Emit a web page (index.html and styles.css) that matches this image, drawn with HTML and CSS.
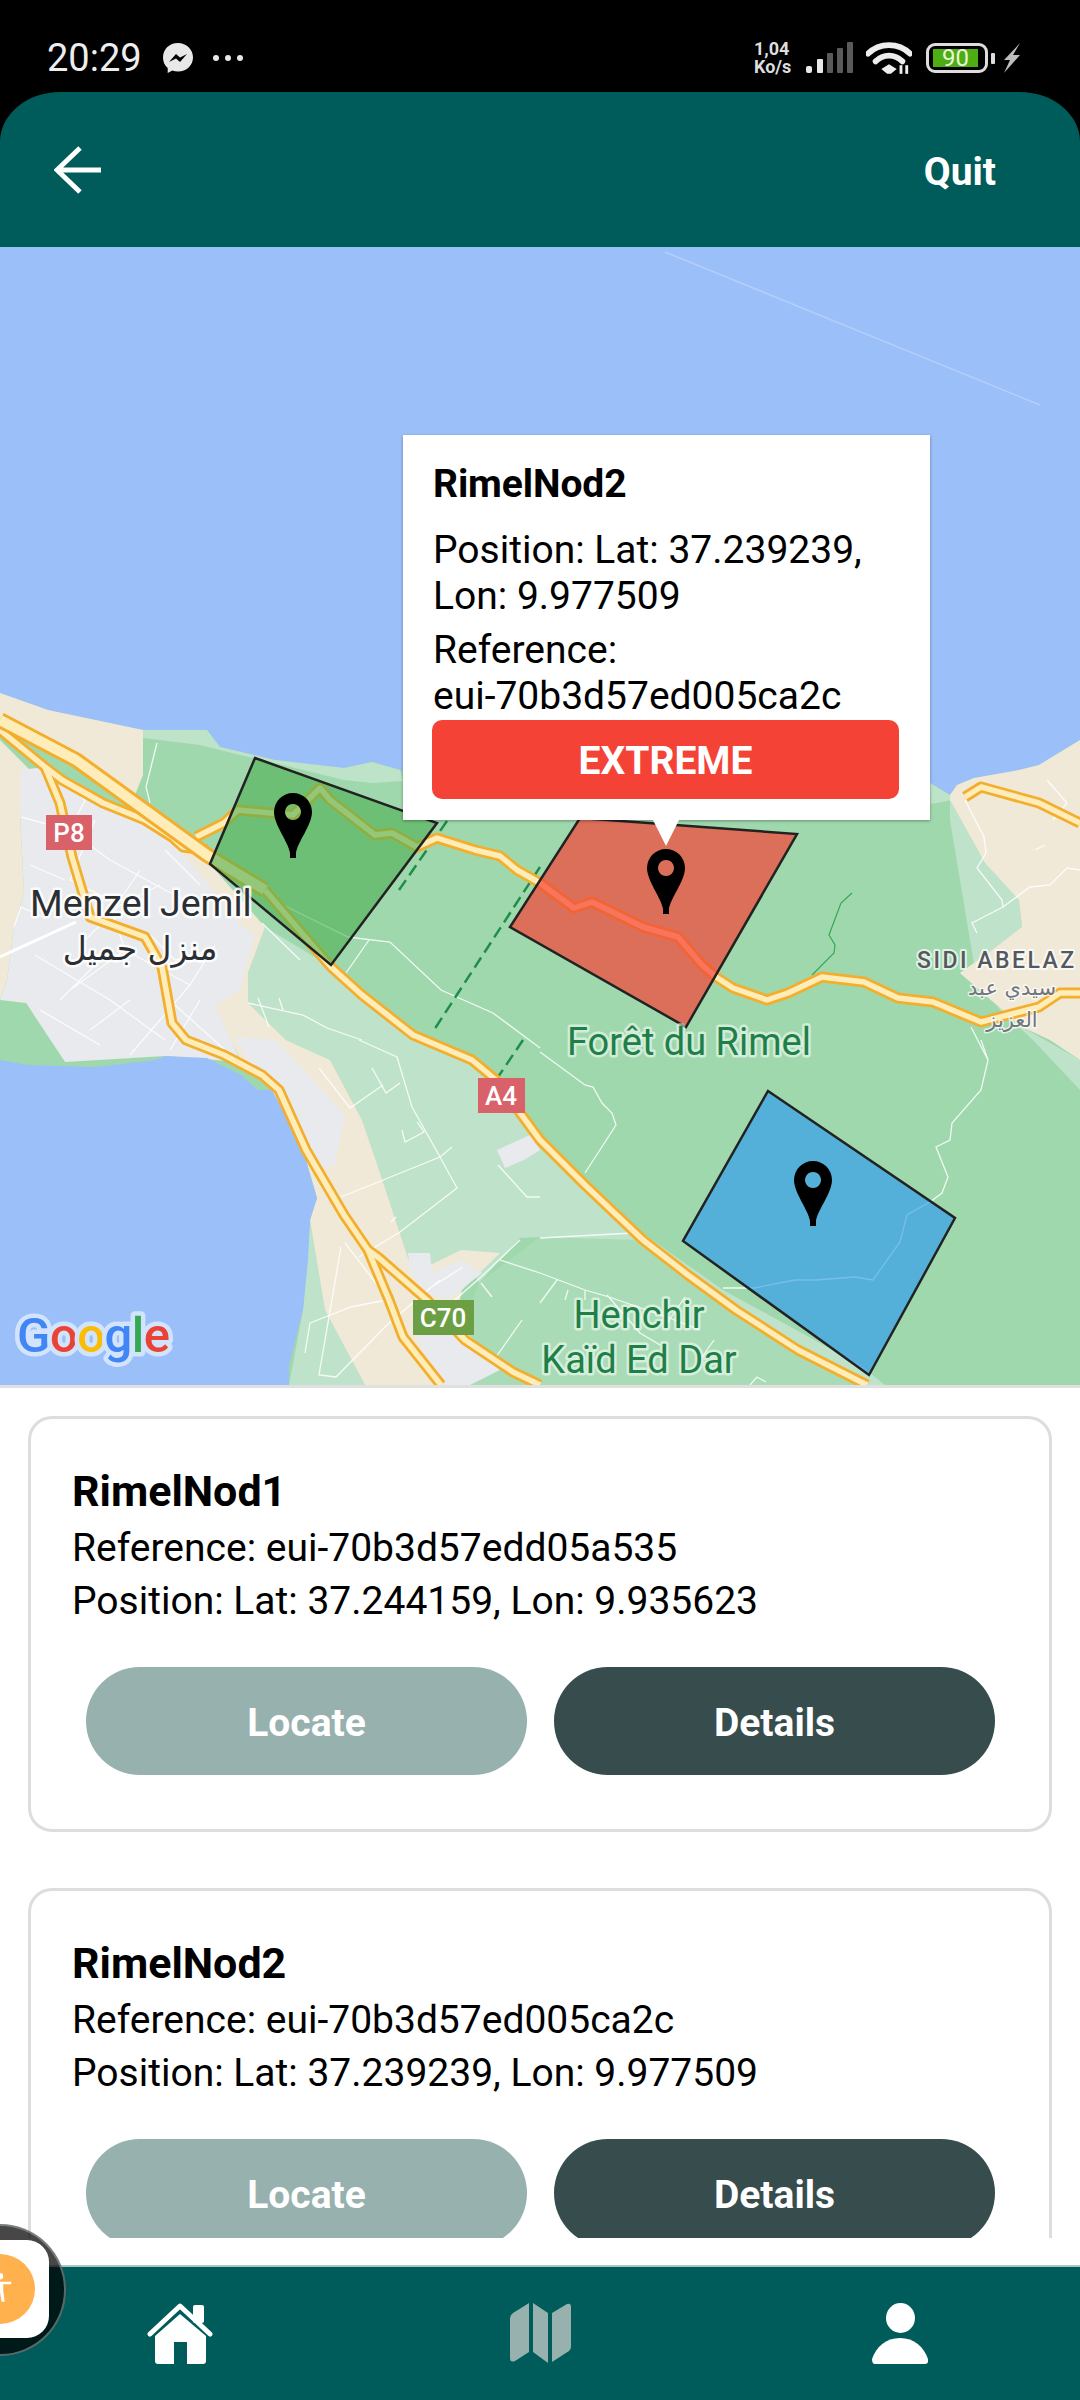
FILE: index.html
```html
<!DOCTYPE html>
<html lang="en">
<head>
<meta charset="utf-8">
<title>Rimel nodes</title>
<link rel="stylesheet" href="styles.css">
</head>
<body>
<div class="app">
  <div class="status-bar">
    <div class="status-left">
      <span class="clock">20:29</span>
      <svg class="messenger" viewBox="0 0 32 32"><path class="msg-bubble" d="M16 1C7.500 1 1 7.200 1 15.400c0 4.300 1.800 8 4.700 10.600V31l4.600-2.500c1.800.6 3.700.9 5.700.9 8.500 0 15-6.200 15-14S24.500 1 16 1z"/><path class="msg-bolt" d="M7 20l7-8 4 3.600L25 12l-7 8-4-3.600z"/></svg>
      <span class="dots"><i></i><i></i><i></i></span>
    </div>
    <div class="status-right">
      <span class="speed">1,04<br>Ko/s</span>
      <svg class="signal" viewBox="0 0 47 32"><rect class="bar-on" x="0" y="24" width="6" height="7" rx="2"/><rect class="bar-on" x="11" y="17" width="6" height="14" rx="1"/><rect class="bar-off" x="21" y="11" width="6" height="20" rx="1"/><rect class="bar-off" x="31" y="6" width="6" height="25" rx="1"/><rect class="bar-off" x="41" y="0" width="6" height="31" rx="1"/></svg>
      <svg class="wifi" viewBox="0 0 48 34"><path class="wifi-arc" d="M2 12C14 0 34 0 46 12"/><path class="wifi-arc" d="M10 20c8-8 20-8 28 0"/><path class="wifi-dot" d="M24 23l-8 5 6 5h4l6-5z"/><rect class="wifi-dot" x="35" y="24" width="3" height="9"/><rect class="wifi-dot" x="41" y="24" width="3" height="9"/></svg>
      <div class="battery"><span class="battery-level">90</span></div>
      <span class="battery-nub"></span>
      <svg class="bolt" viewBox="0 0 20 30"><path d="M19 0L3 17h6L3 30l16-18h-7z"/></svg>
    </div>
  </div>

  <header class="top-bar">
    <svg class="back" viewBox="0 0 48 48"><path d="M26 2L3 24l23 22M3 24h44"/></svg>
    <span class="quit">Quit</span>
  </header>

  <section class="map">
    <svg class="map-canvas" viewBox="0 247 1080 1138">
      <rect class="water" x="0" y="247" width="1080" height="1138"/>
      <path class="streak" d="M665 252L1040 405"/>
      <path class="forest" d="M0 693L48 710 143 730 207 730 220 747 275 760 344 768 372 762 400 770 600 800 930 783 950 795 957 785 974 778 1019 770 1039 765 1080 740V1385H0Z"/>
      <path class="coast" d="M143 730L207 730 220 747 275 760 344 768 372 762 400 770 403 781 372 783 344 780 275 763 240 755 200 745 143 738Z"/>
      <path class="coast" d="M930 783L950 795 952 800 931 804Z"/>
      <path class="meadow" d="M540 1237L633 1233 700 1290 870 1385H441L479 1283Z"/>
      <path class="light" d="M265 927L331 967 413 1035 472 1060 496 1080 540 1140 585 1185 640 1240 540 1237 520 1238 479 1283 461 1250 413 1273 380 1173 362 1120 330 1060 286 1040 248 1003 248 973Z"/>
      <path class="light" d="M645 1235L723 1290 860 1365 885 1385H867L798 1350 688 1275Z"/>
      <path class="light" d="M310 1220L325 1310 365 1385H289L303 1310Z"/>
      <path class="light" d="M950 800L985 863 1019 900 1022 927 988 953 960 973 1022 1027 1080 1060V1090L1033 1040 1000 1010 975 970 950 820Z"/>
      <path class="sand" d="M0 693L48 710 143 730V775L135 795 76 760 0 720Z"/>
      <path class="sand" d="M0 740L30 770 20 813 24 893 14 927 7 980 0 1000Z"/>
      <path class="sand" d="M950 795L957 785 974 778 1019 770 1039 765 1080 740V1060L1050 1040 1022 1027 960 973 988 953 1022 927 1019 900 985 863 950 800Z"/>
      <path class="sand" d="M172 840L210 864 265 927 248 973 248 1003 286 1040 330 1060 362 1120 380 1173 413 1273 461 1250 500 1253 462 1290 441 1385H365L325 1310 310 1220 317 1198 303 1150 272 1090 258 1075 241 1060 213 1007 190 900Z"/>
      <path class="urban" d="M20 770L45 767 103 803 172 837 186 857 241 925 255 935 240 990 215 1005 241 1062 165 1056 65 1062 26 1003 0 1000 7 980 14 927 24 893 20 813Z"/>
      <path class="forest" d="M0 1017L26 1003 45 1033 65 1062H0Z"/>
      <path class="urban" d="M234 1037L276 1040 345 1115 335 1165 317 1170 303 1150 272 1090 258 1075Z"/>
      <path class="urban" d="M408 1253L430 1253 432 1273 462 1260 482 1273 448 1300 427 1293 410 1273Z"/>
      <path class="urban" d="M410 1325L440 1310 480 1345 500 1370 470 1385H440Z"/>
      <path class="urban" d="M497 1150L530 1135 540 1150 524 1160 505 1168Z"/>
      <path class="lake" d="M0 1060L28 1065 96 1067 155 1060 165 1056 207 1058 241 1075 258 1090 272 1090 303 1150 317 1198 310 1220 308 1260 303 1310 289 1365V1385H0Z"/>

      <g class="minor">
        <path d="M157 743L146 787 150 803"/>
        <path d="M262 923L300 960M279 903L348 937 390 942 441 990 493 1013 540 1048M369 940L346 973"/>
        <path d="M248 1003L303 1015 327 1028 362 1040M258 998L269 1027M279 998L283 1010"/>
        <path d="M319 1068L350 1108 383 1085M359 1040L397 1057 412 1107 440 1157 457 1188 400 1232 359 1257M341 1197L440 1157 452 1147M402 1130L405 1142 424 1132 417 1122M372 1068L386 1093 400 1083M391 1222L396 1217"/>
        <path d="M498 1165L527 1197 540 1197M310 1323L305 1353M310 1323L351 1307 386 1300M341 1247L319 1375 336 1377 389 1323 440 1280M345 1243L389 1300M520 1240L481 1277 424 1327M500 1260L540 1273M481 1283L492 1297M522 1320L496 1357M463 1267L427 1290"/>
        <path d="M540 1052L585 1085 593 1087 602 1103 612 1113 616 1125 585 1173"/>
        <path d="M981 1040L988 1060 981 1090 952 1123 950 1140 936 1147 948 1177 942 1193 930 1202 907 1215 900 1242 873 1280 855 1277 816 1280 795 1280 754 1288 723 1288"/>
        <path d="M540 1238L633 1233M540 1273L585 1290 609 1297 667 1317 700 1330M540 1303L557 1280M568 1290L565 1300M585 1290L585 1300M607 1295L640 1333 660 1345M685 1297L667 1323M714 1340L702 1357M757 1377L750 1385M757 1377L766 1382"/>
        <path d="M1047 780L1067 803 1053 820M965 800L984 837 986 853 977 868 1002 900 1003 907 972 923 977 933M1003 907L1030 887 1050 885 1067 868 1080 870M971 1027L988 1060M1035 850L1045 845"/>
        <path d="M21 817L69 830 110 860M14 927L21 907 45 918M60 780L85 800 70 830M95 820L70 880 110 900M110 860L165 890 205 910M80 945L120 905 160 885M35 955L110 1000 165 1040M70 990L125 950 190 985M125 950L110 905M150 935L175 960 210 950M190 985L160 1020 130 1055M215 945L190 985M60 1000L95 965M90 1030L130 1000M100 1045L40 1010M175 1005L225 1050M200 1000L170 1050M140 870L120 900M30 865L65 880M165 850L200 885"/>
      </g>
      <path class="minor-wide" d="M0 957L76 922"/>

      <path class="dash" d="M447 821L399 890M540 867L434 1030M523 1040L498 1077"/>
      <path class="stream" d="M852 893L841 903 829 935 835 945 834 953 812 975"/>

      <g class="roads">
        <path id="r-highway" d="M265 890L331 967 362 995 413 1035 472 1060 496 1080 540 1140 585 1185 643 1240 688 1275 736 1310 798 1350 867 1385"/>
        <path id="r-branch" d="M0 730L45 767 62 780 103 803 145 820 172 837 183 847 207 850"/>
        <path id="r-p8" d="M45 767L60 803 72 857 90 917 145 937 162 967 172 1023 186 1040 224 1055 262 1075 279 1090 306 1150 344 1215 368 1250 389 1300 403 1337 441 1385"/>
        <path id="r-c70" d="M368 1250L379 1258 427 1300 465 1340 513 1372 540 1385"/>
        <path id="r-east" d="M196 837L224 823 238 810 293 815 320 788 330 800 375 835 392 833 417 847 437 838 475 850 500 856 517 870 540 883 574 908 592 902 643 927 678 937 702 965 716 977 733 988 767 1000 788 993 822 977 864 982 898 998 933 1002 981 1022 1039 1007 1060 993 1080 993"/>
        <path id="r-ne" d="M965 797L981 787 1039 803 1080 823"/>
      </g>
      <g class="road-core">
        <use href="#r-highway"/><use href="#r-branch"/><use href="#r-p8"/><use href="#r-c70"/><use href="#r-east"/><use href="#r-ne"/>
      </g>
      <path class="motorway" d="M0 720L76 760 207 855 265 890"/>
      <path class="motorway-core" d="M0 720L76 760 207 855 265 890"/>

      <path class="zone zone-green" d="M255 758L437 823 331 965 210 864Z"/>
      <path class="zone zone-red" d="M580 818L797 834 686 1027 510 927Z"/>
      <path class="zone zone-blue" d="M768 1091L955 1218 869 1375 683 1241Z"/>

      <g class="pins">
        <path transform="translate(293 793)" d="M-3 65V60C-4 50-19 32-19 19A19 19 0 1 1 19 19C19 32 4 50 3 60V65ZM0 11A8 8 0 1 0 .01 11Z"/>
        <path transform="translate(666 849)" d="M-3 65V60C-4 50-19 32-19 19A19 19 0 1 1 19 19C19 32 4 50 3 60V65ZM0 11A8 8 0 1 0 .01 11Z"/>
        <path transform="translate(813 1161)" d="M-3 65V60C-4 50-19 32-19 19A19 19 0 1 1 19 19C19 32 4 50 3 60V65ZM0 11A8 8 0 1 0 .01 11Z"/>
      </g>

      <text class="label town" x="30" y="916">Menzel Jemil</text>
      <text class="label town-ar" x="140" y="960" text-anchor="middle">منزل جميل</text>
      <text class="label park" x="567" y="1055">Forêt du Rimel</text>
      <text class="label park" x="639" y="1328" text-anchor="middle">Henchir</text>
      <text class="label park" x="639" y="1373" text-anchor="middle">Kaïd Ed Dar</text>
      <text class="label place" x="917" y="968">SIDI ABELAZ</text>
      <text class="label place-ar" x="1012" y="995" text-anchor="middle">سيدي عبد</text>
      <text class="label place-ar" x="1012" y="1027" text-anchor="middle">العزيز</text>

      <rect class="shield-red" x="46" y="815" width="46" height="35"/>
      <text class="shield-text" x="69" y="842" text-anchor="middle">P8</text>
      <rect class="shield-red" x="478" y="1078" width="47" height="35"/>
      <text class="shield-text" x="501" y="1105" text-anchor="middle">A4</text>
      <rect class="shield-green" x="413" y="1300" width="61" height="35"/>
      <text class="shield-text" x="443" y="1327" text-anchor="middle">C70</text>

      <text class="google" x="17" y="1352"><tspan class="g-blue">G</tspan><tspan class="g-red">o</tspan><tspan class="g-yellow">o</tspan><tspan class="g-blue">g</tspan><tspan class="g-green">l</tspan><tspan class="g-red">e</tspan></text>
    </svg>

    <div class="popup">
      <h2 class="popup-title">RimelNod2</h2>
      <p class="popup-text">Position: Lat: 37.239239, Lon: 9.977509</p>
      <p class="popup-text">Reference:<br>eui-70b3d57ed005ca2c</p>
      <div class="severity">EXTREME</div>
    </div>
  </section>

  <main class="list">
    <article class="card">
      <h3 class="card-title">RimelNod1</h3>
      <p class="card-line">Reference: eui-70b3d57edd05a535</p>
      <p class="card-line">Position: Lat: 37.244159, Lon: 9.935623</p>
      <div class="actions">
        <span class="btn btn-locate">Locate</span>
        <span class="btn btn-details">Details</span>
      </div>
    </article>
    <article class="card">
      <h3 class="card-title">RimelNod2</h3>
      <p class="card-line">Reference: eui-70b3d57ed005ca2c</p>
      <p class="card-line">Position: Lat: 37.239239, Lon: 9.977509</p>
      <div class="actions">
        <span class="btn btn-locate">Locate</span>
        <span class="btn btn-details">Details</span>
      </div>
    </article>
  </main>

  <nav class="tab-bar">
    <div class="tab">
      <svg class="tab-home" viewBox="0 0 66 62"><rect class="home-fill" x="46" y="2" width="11" height="18" rx="2"/><path class="home-roof" d="M3 31L33 3 63 31"/><path class="home-fill" d="M33 11L8 33V58Q8 61 11 61H27V39H40V61H56Q59 61 59 58V33Z"/></svg>
    </div>
    <div class="tab">
      <svg class="tab-map" viewBox="0 0 61 60"><path d="M19 0V49L5 58Q0 60 0 55V15Q0 12 3 10ZM23 0L38 10V60L23 49ZM42 10L57 1Q61 0 61 4V44Q61 46 59 48L42 59Z"/></svg>
    </div>
    <div class="tab">
      <svg class="tab-user" viewBox="0 0 56 61"><ellipse cx="28.500" cy="15" rx="14.500" ry="15"/><path d="M3 61H53Q57 61 56 56C52 44 42 35 28 35S4 44 0 56Q0 61 3 61Z"/></svg>
    </div>
  </nav>

  <div class="a11y">
    <div class="a11y-tile">
      <div class="a11y-dot">
        <svg class="a11y-icon" viewBox="0 0 36 40"><circle cx="18" cy="4" r="4"/><path d="M4 11H32V14H22V22L24 36H20L18 24 16 36H12L14 22V14H4Z"/></svg>
      </div>
    </div>
  </div>
</div>
</body>
</html>
```

FILE: styles.css
```css
* { box-sizing: border-box; }
html, body { margin: 0; padding: 0; }
body { background: #fff; font-family: Roboto, "Noto Sans", sans-serif; color: #000; }
.app { position: relative; width: 1080px; height: 2400px; overflow: hidden; background: #000; display: flex; flex-direction: column; }

.status-bar { height: 92px; flex: none; display: flex; justify-content: space-between; align-items: center; padding: 24px 59px 0 47px; color: #eee; }
.status-left { display: flex; align-items: center; }
.clock { font-size: 38px; line-height: 44px; width: 115px; }
.messenger { width: 32px; height: 32px; }
.msg-bubble { fill: #e8e8e8; }
.msg-bolt { fill: #000; }
.dots { display: flex; gap: 6px; margin-left: 19px; }
.dots i { width: 6px; height: 6px; border-radius: 50%; background: #e8e8e8; }
.status-right { display: flex; align-items: center; }
.speed { font-size: 18px; line-height: 18px; font-weight: 700; width: 52px; color: #ddd; text-align: left; }
.signal { width: 47px; height: 32px; }
.bar-on { fill: #e8e8e8; }
.bar-off { fill: #5a5a5a; }
.wifi { width: 46px; height: 33px; margin-left: 13px; }
.wifi-arc { fill: none; stroke: #eee; stroke-width: 6; stroke-linecap: round; }
.wifi-dot { fill: #eee; }
.battery { width: 62px; height: 30px; margin-left: 14px; border: 3px solid #ddd; border-radius: 9px; padding: 3px 7px 3px 4px; display: flex; }
.battery-level { flex: 1; background: #4fad14; color: #e8f5d8; font-size: 24px; line-height: 18px; text-align: center; }
.battery-nub { width: 4px; height: 11px; margin-left: 3px; background: #ddd; border-radius: 1px; }
.bolt { width: 20px; height: 30px; margin-left: 6px; }
.bolt path { fill: #bdbdbd; }

.top-bar { height: 155px; flex: none; background: #005c5a; border-radius: 60px 60px 0 0 / 50px 50px 0 0; display: flex; justify-content: space-between; align-items: center; padding: 0 84px 0 54px; }
.back { width: 48px; height: 48px; }
.back path { fill: none; stroke: #fff; stroke-width: 5; }
.quit { color: #fff; font-size: 39px; font-weight: 700; line-height: 44px; margin-top: 4px; }

.map { position: relative; height: 1141px; flex: none; border-bottom: 3px solid #e0e0e0; }
.map-canvas { display: block; width: 1080px; height: 1138px; }
.water { fill: #9bbff8; }
.lake { fill: #9bbff8; }
.streak { fill: none; stroke: #b5cffa; stroke-width: 1.500; }
.forest { fill: #a0d8ae; }
.coast { fill: #bde3c9; }
.light { fill: #bfe3ca; }
.meadow { fill: #a9dcb6; }
.sand { fill: #f1e9d8; }
.urban { fill: #e8eaed; }
.minor { fill: none; stroke: #fff; stroke-width: 1.300; opacity: .85; }
.minor-wide { fill: none; stroke: #fff; stroke-width: 3; }
.dash { fill: none; stroke: #1e8e4a; stroke-width: 2.500; stroke-dasharray: 12 6; }
.stream { fill: none; stroke: #34a853; stroke-width: 1.200; }
.roads { fill: none; stroke: #f2ae2c; stroke-width: 11; stroke-linejoin: round; }
.road-core { fill: none; stroke: #feecb9; stroke-width: 5.500; stroke-linejoin: round; }
.motorway { fill: none; stroke: #f2ae2c; stroke-width: 16; stroke-linejoin: round; }
.motorway-core { fill: none; stroke: #feecb9; stroke-width: 10; stroke-linejoin: round; }
.zone { stroke: #222; stroke-width: 2.500; stroke-linejoin: miter; }
.zone-green { fill: rgba(76, 175, 80, .6); }
.zone-red { fill: rgba(244, 67, 54, .7); }
.zone-blue { fill: rgba(33, 150, 243, .6); }
.pins path { fill: #000; fill-rule: evenodd; }

.label { paint-order: stroke; stroke-linejoin: round; font-family: Roboto, sans-serif; }
.town { font-size: 37.500px; fill: #2b2f33; stroke: rgba(255, 255, 255, .85); stroke-width: 5px; }
.town-ar { font-family: "DejaVu Sans", sans-serif; font-size: 33px; fill: #2b2f33; stroke: rgba(255, 255, 255, .85); stroke-width: 5px; }
.park { font-size: 38px; fill: #1e8047; stroke: rgba(255, 255, 255, .55); stroke-width: 5px; }
.place { font-size: 23px; font-weight: 500; letter-spacing: 2.500px; fill: #54595f; stroke: rgba(255, 255, 255, .7); stroke-width: 4px; }
.place-ar { font-family: "DejaVu Sans", sans-serif; font-size: 21px; fill: #70757a; stroke: rgba(255, 255, 255, .7); stroke-width: 3px; }
.shield-red { fill: #d9626a; }
.shield-green { fill: #6c9f43; }
.shield-text { font-size: 26px; font-weight: 500; fill: #fff; }
.google { font-size: 49px; font-weight: 500; letter-spacing: -.5px; paint-order: stroke; stroke: #d2e3fc; stroke-width: 9px; stroke-linejoin: round; }
.g-blue { fill: #4285f4; }
.g-red { fill: #ea4335; }
.g-yellow { fill: #fbbc05; }
.g-green { fill: #34a853; }

.popup { position: absolute; left: 403px; top: 188px; width: 527px; height: 385px; background: #fff; padding: 26px 30px 0; box-shadow: 0 1px 3px rgba(0, 0, 0, .35); }
.popup::after { content: ""; position: absolute; left: 250px; top: 385px; border-left: 13px solid transparent; border-right: 13px solid transparent; border-top: 26px solid #fff; }
.popup-title { margin: 0 0 20px; font-size: 39px; line-height: 46px; font-weight: 700; letter-spacing: -.1px; }
.popup-text { margin: 0 0 8px; font-size: 39px; line-height: 46px; }
.severity { margin: -7px 0 0 -1px; width: 467px; height: 79px; border-radius: 10px; background: #f44336; color: #fff; font-size: 39px; font-weight: 700; display: flex; align-items: center; justify-content: center; padding-top: 2px; }

.list { height: 877px; flex: none; overflow: hidden; background: #fff; border-bottom: 27px solid #fff; padding: 28px 28px 0; display: flex; flex-direction: column; gap: 56px; }
.card { flex: none; height: 416px; border: 3px solid #ddd; border-radius: 24px; padding: 47px 41px 0; background: #fff; }
.card-title { margin: 0 0 6px; font-size: 43px; line-height: 50px; font-weight: 700; }
.card-line { margin: 0; font-size: 39px; line-height: 53px; white-space: nowrap; }
.actions { display: flex; gap: 27px; margin: 39px 13px 0 14px; }
.btn { flex: 1; height: 108px; border-radius: 54px; color: #fff; font-size: 39px; font-weight: 700; display: flex; align-items: center; justify-content: center; padding-top: 4px; }
.btn-locate { background: #97b1ae; }
.btn-details { background: #364c4d; }

.tab-bar { height: 135px; flex: none; background: #005c5a; border-top: 2px solid #a8c8c6; display: grid; grid-template-columns: repeat(3, 1fr); padding-top: 36px; }
.tab { display: flex; justify-content: center; align-items: flex-start; }
.tab-home { width: 66px; height: 62px; }
.home-roof { fill: none; stroke: #fff; stroke-width: 5; stroke-linecap: round; stroke-linejoin: round; }
.home-fill { fill: #fff; }
.tab-map { width: 61px; height: 60px; }
.tab-map path { fill: #97b1ae; }
.tab-user { width: 56px; height: 61px; }
.tab-user ellipse, .tab-user path { fill: #fff; }

.a11y { position: absolute; left: -66px; top: 2224px; width: 132px; height: 132px; border-radius: 50%; background: rgba(0, 0, 0, .72); border: 2px solid rgba(160, 170, 170, .55); }
.a11y-tile { position: absolute; left: 15px; top: 14px; width: 98px; height: 98px; border-radius: 22px; background: #fff; }
.a11y-dot { position: absolute; left: 14px; top: 14px; width: 70px; height: 70px; border-radius: 50%; background: #ffb14e; display: flex; align-items: center; justify-content: center; }
.a11y-icon { width: 30px; height: 32px; }
.a11y-icon circle, .a11y-icon path { fill: #fff; }
```
